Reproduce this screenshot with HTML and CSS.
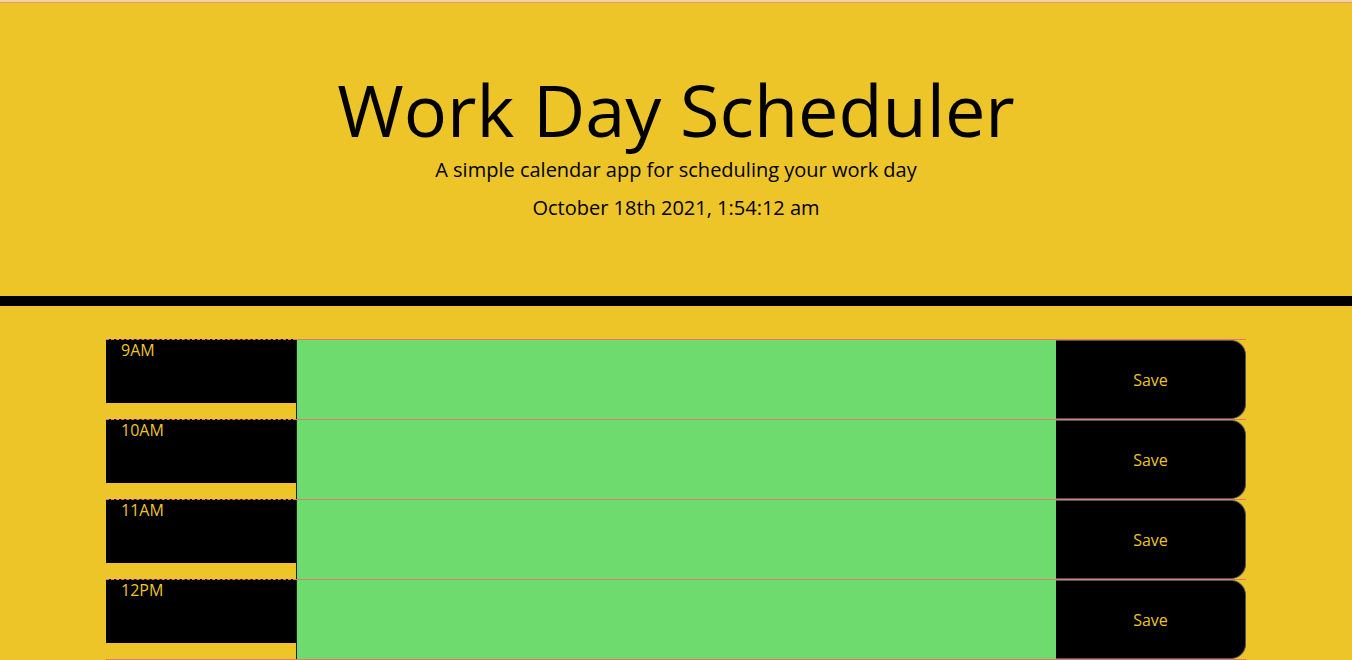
FILE: index.html
```html
<!DOCTYPE html>
<html lang="en">
<head>
<meta charset="utf-8">
<title>Work Day Scheduler</title>
<link rel="stylesheet" href="styles.css">
</head>
<body>
<div class="topline"></div>
<header class="jumbotron">
  <h1 class="title">Work Day Scheduler</h1>
  <p class="lead">A simple calendar app for scheduling your work day</p>
  <p class="lead date">October 18th 2021, 1:54:12 am</p>
</header>
<main class="container">
  <div class="row">
    <div class="hour">9AM</div>
    <textarea class="description future"></textarea>
    <button class="saveBtn">Save</button>
  </div>
  <div class="row">
    <div class="hour">10AM</div>
    <textarea class="description future"></textarea>
    <button class="saveBtn">Save</button>
  </div>
  <div class="row">
    <div class="hour">11AM</div>
    <textarea class="description future"></textarea>
    <button class="saveBtn">Save</button>
  </div>
  <div class="row">
    <div class="hour">12PM</div>
    <textarea class="description future"></textarea>
    <button class="saveBtn">Save</button>
  </div>
</main>
</body>
</html>
```

FILE: styles.css
```css
html, body {
  margin: 0;
  padding: 0;
}
body {
  background: #edc529;
  font-family: "Open Sans", "Noto Sans", sans-serif;
  color: #000;
}
.topline {
  height: 2px;
  background: #f8cf9e;
  border-bottom: 1px solid #c9a777;
}
.jumbotron {
  text-align: center;
  padding: 63px 32px 70px;
  border-bottom: 10px solid #000;
  margin-bottom: 33px;
}
.title {
  margin: 0;
  font-size: 72px;
  font-weight: 400;
  line-height: 1.2;
}
.lead {
  margin: 0;
  font-size: 20px;
  line-height: 36px;
}
.date {
  margin-top: 2px;
}
.container {
  width: 1140px;
  margin: 0 auto;
  border-bottom: 1px solid #e4786a;
}
.row {
  box-sizing: border-box;
  display: flex;
  height: 80px;
  border-top: 1px solid #e4786a;
}
.hour {
  box-sizing: border-box;
  width: 190px;
  flex: none;
  height: 64px;
  margin-top: -1px;
  border-top: 1px dashed #e4786a;
  background: #000;
  color: #edc529;
  font-size: 16px;
  line-height: 16px;
  padding: 2px 15px 0;
}
.description {
  box-sizing: border-box;
  width: 760px;
  flex: none;
  height: 79px;
  margin: 0;
  border: none;
  border-left: 1px solid #222;
  background: #6ddb6d;
  resize: none;
  padding: 0;
  font-family: inherit;
}
.saveBtn {
  box-sizing: border-box;
  width: 190px;
  flex: none;
  height: 79px;
  margin: 0;
  background: #000;
  color: #edc529;
  border: 1px solid #555;
  border-left: none;
  border-radius: 0 15px 15px 0;
  font-family: inherit;
  font-size: 16px;
  padding: 0;
}
```
